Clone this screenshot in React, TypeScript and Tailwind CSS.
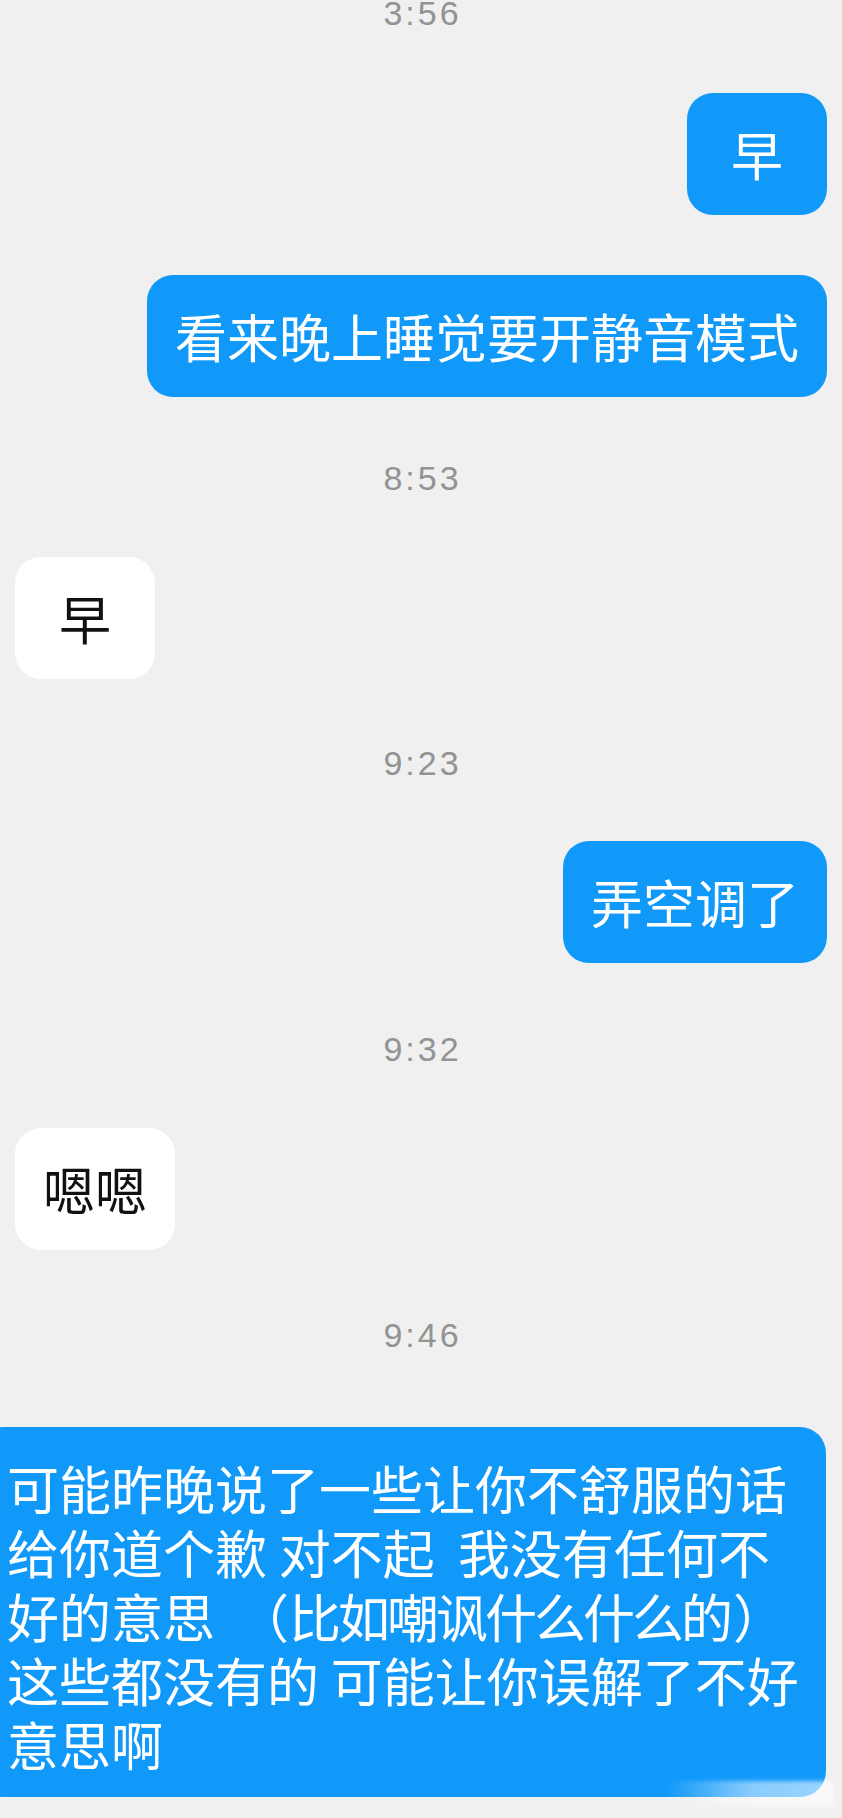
import React from "react";

function Stamp({ t, className }: { t: string; className: string }) {
  return (
    <div
      className={`pl-[3px] text-center text-[34px] leading-[40px] tracking-[3px] text-[#939393] font-['Liberation_Sans',Arial,sans-serif] ${className}`}
    >
      {t}
    </div>
  );
}

export default function App() {
  return (
    <div className="w-full min-h-[1818px] bg-[#f0f0f0] overflow-hidden flex flex-col font-['Noto_Sans_CJK_SC','Noto_Sans',sans-serif]">
      <Stamp t="3:56" className="-mt-[7px]" />

      <div className="mt-[60px] self-end mr-[15px] min-w-[140px] rounded-[26px] bg-[#1199fa] px-7 py-[29px] text-center text-[52px] leading-[64px] text-white">
        早
      </div>

      <div className="mt-[60px] self-end mr-[15px] rounded-[26px] bg-[#1199fa] px-7 py-[29px] text-[52px] leading-[64px] text-white whitespace-pre">
        看来晚上睡觉要开静音模式
      </div>

      <Stamp t="8:53" className="mt-[61px]" />

      <div className="mt-[59px] self-start ml-[15px] min-w-[140px] rounded-[26px] bg-white px-7 py-[29px] text-center text-[52px] leading-[64px] text-[#111111]">
        早
      </div>

      <Stamp t="9:23" className="mt-[64px]" />

      <div className="mt-[58px] self-end mr-[15px] rounded-[26px] bg-[#1199fa] px-7 py-[29px] text-[52px] leading-[64px] text-white whitespace-pre">
        弄空调了
      </div>

      <Stamp t="9:32" className="mt-[66px]" />

      <div className="mt-[59px] self-start ml-[15px] min-w-[140px] rounded-[26px] bg-white px-7 py-[29px] text-center text-[52px] leading-[64px] text-[#111111]">
        嗯嗯
      </div>

      <Stamp t="9:46" className="mt-[65px]" />

      <div className="relative mt-[72px] self-start -ml-[22px] w-[848px] rounded-[26px] bg-[#1199fa] pl-[29px] pr-4 pt-[29px] pb-[21px] text-[52px] leading-[64px] text-white whitespace-pre">
        <div>可能昨晚说了一些让你不舒服的话</div>
        <div>给你道个歉 对不起  我没有任何不</div>
        <div>
          好的意思<span className="ml-[22px]">（</span>
          <span className="tracking-[-3px]">比如嘲讽什么什么的</span>
          <span className="ml-[3px]">）</span>
        </div>
        <div>这些都没有的 可能让你误解了不好</div>
        <div>意思啊</div>
        <div className="absolute right-[-8px] bottom-[-10px] h-[26px] w-[168px] bg-gradient-to-r from-white/0 via-white/50 to-white/60 blur-[2px]" />
      </div>
    </div>
  );
}
